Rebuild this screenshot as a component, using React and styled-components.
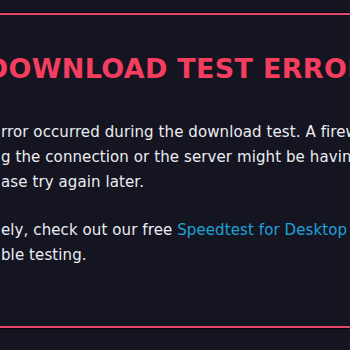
import React from 'react'
import styled, { createGlobalStyle } from 'styled-components'

const GlobalStyle = createGlobalStyle`
  html, body {
    margin: 0;
    padding: 0;
    background: #141520;
    overflow: hidden;
  }
`

const Page = styled.div`
  width: 350px;
  height: 350px;
  overflow: hidden;
  background: #141520;
  padding-top: 13px;
  box-sizing: border-box;
`

const Panel = styled.section`
  margin: 0 -40px;
  height: 315px;
  box-sizing: border-box;
  border-top: 2px solid #e8466a;
  border-bottom: 2px solid #e8466a;
  box-shadow: 0 -1px 0 #05050a, 0 1px 0 #05050a;
  padding: 37px 40px 0;
  display: flex;
  flex-direction: column;
`

const Title = styled.h1`
  margin: 0 -24px 0 -20px;
  font-family: 'DejaVu Sans', 'Open Sans', sans-serif;
  font-weight: 700;
  font-size: 27px;
  line-height: 34px;
  color: #f53d5f;
  text-align: center;
  white-space: nowrap;
  letter-spacing: 0.3px;
`

const Body = styled.div`
  margin-top: 34px;
  display: flex;
  flex-direction: column;
  gap: 23px;
`

const Paragraph = styled.p`
  margin: 0;
  font-family: 'DejaVu Sans', 'Open Sans', sans-serif;
  font-size: 15px;
  line-height: 25px;
  color: #ececf2;
  letter-spacing: 0.1px;
`

const Line = styled.span`
  display: block;
  white-space: nowrap;
  padding-left: 1px;
`

const Link = styled.a`
  color: #1ea2d9;
  text-decoration: none;
`

export default function App() {
  return (
    <>
      <GlobalStyle />
      <Page>
        <Panel>
          <Title>DOWNLOAD TEST ERROR</Title>
          <Body>
            <Paragraph>
              <Line>rror occurred during the download test. A firewall may be</Line>
              <Line>g the connection or the server might be having issues.</Line>
              <Line>ase try again later.</Line>
            </Paragraph>
            <Paragraph>
              <Line>
                ely, check out our free <Link href="#">Speedtest for Desktop</Link> app for more
              </Line>
              <Line>ble testing.</Line>
            </Paragraph>
          </Body>
        </Panel>
      </Page>
    </>
  )
}
